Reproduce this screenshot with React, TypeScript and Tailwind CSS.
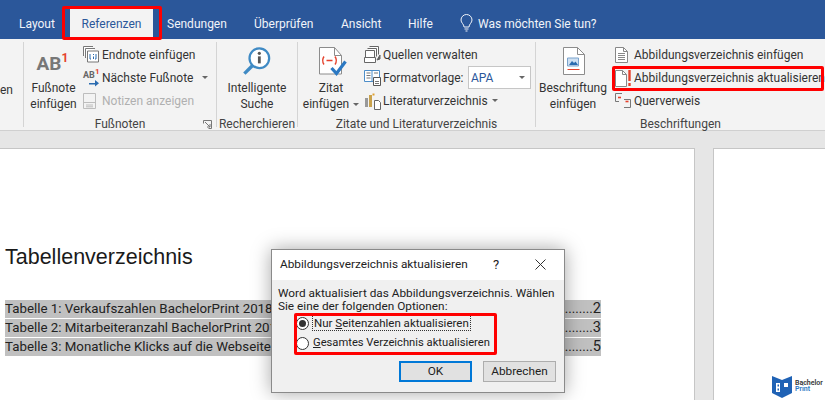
import React from 'react';

const Tab: React.FC<{ label: string; className?: string }> = ({ label, className }) => (
    <span className={`text-[12px] leading-[34px] text-[#f1f4f9] ${className ?? ''}`}>{label}</span>
);

const SmallItem: React.FC<{ icon: React.ReactNode; label: string; disabled?: boolean; arrow?: string }> = ({ icon, label, disabled, arrow }) => (
    <div className="flex items-center h-[23px] whitespace-nowrap">
        <span className="w-[19px] h-[20px] flex items-center shrink-0">{icon}</span>
        <span className={disabled ? 'text-[#b0b0b0]' : 'text-[#333]'}>{label}</span>
        {arrow && <span className={`w-0 h-0 border-x-[3px] border-x-transparent border-t-[3px] border-t-[#666] ${arrow}`} />}
    </div>
);

const GroupLabel: React.FC<{ label: string; launcher?: boolean }> = ({ label, launcher }) => (
    <div className="absolute left-0 right-0 bottom-[-9px] h-[22px] text-center leading-[20px] text-[#444]">
        {label}
        {launcher && (
            <svg className="absolute right-[4px] top-[6px]" width="9" height="9" viewBox="0 0 9 9" fill="none" stroke="#777">
                <path d="M.5 3.500v-3h8v8h-3M2 2l5 5M4 7h3V4" />
            </svg>
        )}
    </div>
);

const StackIcon = () => (
    <svg width="16" height="17" viewBox="0 0 16 17" fill="none" stroke="#777">
        <path d="M.5 10V.5H10M2.500 12V2.500H12M4.500 5h11v11h-11z" fill="#fff" />
        <path d="M7 8v5h1M13 8v5h-1M10.500 8v1M10.500 10.500v2.500" stroke="#2b6cb0" />
    </svg>
);

const NextNoteIcon = () => (
    <span className="relative block w-[16px] h-[18px] font-bold text-[9px] leading-[12px] text-[#666]">
        AB
        <span className="absolute left-[12px] top-[-3px] text-[#e5412c] text-[8px]">1</span>
        <svg className="absolute left-[6px] top-[10px]" width="10" height="8" viewBox="0 0 10 8">
            <path d="M0 4h6V1l4 3.200L6 7.500V5.500H0z" fill="#2b6cb0" />
        </svg>
    </span>
);

const NotesIcon = () => (
    <svg width="13" height="16" viewBox="0 0 13 16" fill="none" stroke="#bdbdbd">
        <path d="M.5.500h12v15H.5zM.5 9.500h12M3 12h7M3 13.800h7" />
    </svg>
);

const SearchInfoIcon = () => (
    <svg width="30" height="29" viewBox="0 0 30 31" fill="none">
        <circle cx="17.500" cy="12" r="10.500" stroke="#3f8ac4" strokeWidth="2.400" fill="#fff" />
        <path d="M10 20L1.500 28.500" stroke="#3f8ac4" strokeWidth="3.600" />
        <circle cx="17.500" cy="6.800" r="1.700" fill="#555" />
        <path d="M17.500 10v7.500" stroke="#555" strokeWidth="3" />
    </svg>
);

const CitationIcon = () => (
    <svg width="28" height="29" viewBox="0 0 28 29" fill="none">
        <path d="M.5.500h15l7 8V27H.5z" fill="#fff" stroke="#8c8c8c" />
        <path d="M15.500.500v8h7" stroke="#8c8c8c" />
        <path d="M5 9.500c-2 3-2 5 0 8M16 9.500c2 3 2 5 0 8M7.500 13.500h6" stroke="#e5412c" strokeWidth="1.400" />
        <path d="M12.500 21l5 5.500 9-12" stroke="#2b78c2" strokeWidth="3.200" />
    </svg>
);

const SourcesIcon = () => (
    <svg width="17" height="18" viewBox="0 0 17 18" fill="none" stroke="#666">
        <path d="M5.500.500h9v8M3.500 2.500h9v8M1.500 4.500h9v7h-9z" fill="#fff" />
        <path d="M.5 11.500h11v5H.5z" fill="#fff" />
        <path d="M13 14l3-5v4z" fill="#666" />
    </svg>
);

const StyleIcon = () => (
    <svg width="17" height="17" viewBox="0 0 17 17" fill="none">
        <path d="M.5 1.500h15v11H.5zM8 1.500v11" stroke="#4d8ec9" fill="#fff" />
        <path d="M2.500 4h4M2.500 6.500h4M2.500 9h4M10 4h4" stroke="#777" />
        <path d="M9.500 8.500h7v8h-7z" stroke="#555" fill="#fff" />
        <path d="M11 12.500h4M11 14.500h4" stroke="#777" />
    </svg>
);

const BibIcon = () => (
    <svg width="17" height="18" viewBox="0 0 17 18" fill="none">
        <path d="M1 6h3v9H1z" fill="#999" />
        <path d="M5 3h3v12H5z" fill="#c9a24d" />
        <path d="M8.500 2.500h2" stroke="#e0a030" strokeWidth="2" />
        <path d="M10.500 8.500h4l2 2v7h-6z" stroke="#666" fill="#fff" />
    </svg>
);

const CaptionIcon = () => (
    <svg width="22" height="28" viewBox="0 0 22 28" fill="none">
        <path d="M.5.500h14l7 7v20H.5z" fill="#fff" stroke="#8c8c8c" />
        <path d="M14.500.500v7h7" stroke="#8c8c8c" />
        <path d="M4.500 11h11v8h-11z" fill="#cfe0f2" stroke="#7aa3cc" />
        <path d="M6 18l3-4 2 2 1.500-1.500L15 18z" fill="#2b6cb0" />
        <path d="M4.500 22.500h12" stroke="#e5412c" />
    </svg>
);

const ListIcon = () => (
    <svg width="13" height="16" viewBox="0 0 13 16" fill="none" stroke="#888">
        <path d="M.5.500h8l4 4v11H.5z" fill="#fff" />
        <path d="M8.500.500v4h4M3 6.500h7M3 8.500h7M3 10.500h7M3 12.500h7" />
    </svg>
);

const UpdateIcon = () => (
    <svg width="17" height="18" viewBox="0 0 17 18" fill="none">
        <path d="M.5 1.500h7l4 4v12H.5z" fill="#fff" stroke="#888" />
        <path d="M7.500 1.500v4h4" stroke="#888" />
        <path d="M14.500 1v11" stroke="#e5412c" strokeWidth="2.400" />
        <path d="M14.500 14v3" stroke="#e5412c" strokeWidth="2.400" />
    </svg>
);

const CrossRefIcon = () => (
    <svg width="16" height="15" viewBox="0 0 16 15" fill="none">
        <path d="M7 .500H.5v8H4M9 6.500h6.500v8H9" stroke="#777" />
        <path d="M3 4.500h3" stroke="#e5412c" strokeWidth="1.600" />
        <path d="M10.500 8.500h3" stroke="#e5412c" strokeWidth="1.600" />
    </svg>
);

const TocRow: React.FC<{ text: string; dots: number; page: number }> = ({ text, dots, page }) => (
    <div className="flex justify-between bg-[#c0c0c0] text-[#222] text-[13.300px] leading-[18px] whitespace-nowrap">
        <span>{text}</span>
        <span>{'.'.repeat(dots)}<span className="text-[14.500px]">{page}</span></span>
    </div>
);

const Radio: React.FC<{ checked?: boolean }> = ({ checked }) => (
    <span className="w-[13px] h-[13px] rounded-full border border-[#333] bg-white flex items-center justify-center shrink-0">
        {checked && <span className="w-[7px] h-[7px] rounded-full bg-[#333]" />}
    </span>
);

const Logo = () => (
    <div className="absolute left-[771px] top-[374px] flex items-center">
        <svg width="22" height="24" viewBox="0 0 22 24">
            <path d="M1 2l10 4 10-4v17l-10 5-10-5z" fill="#1f62b5" />
            <path d="M5 9h4v9H5zM13 9h4v4h-4z" fill="#fff" />
            <path d="M6.500 10.500h1.500v2h-1.500zM6.500 14.500h1.500v2h-1.500zM14.500 14v5h-1.500v-5z" fill="#1f62b5" />
        </svg>
        <div className="ml-[2px] text-[7px] leading-[6px] font-semibold">
            <div className="text-[#333]">Bachelor</div>
            <div className="text-[#2b78c2]">Print</div>
        </div>
    </div>
);

export default function App() {
    return (
        <div className="relative w-[825px] h-[400px] overflow-hidden flex flex-col bg-[#e6e6e6] font-['Roboto',sans-serif] text-[12px]">
            {/* Title / tab strip */}
            <div className="relative h-[39px] bg-[#2b579a] shrink-0 flex items-start pt-[7px]">
                <Tab label="Layout" className="ml-[19px] w-[36px]" />
                <div className="ml-[15px] w-[83px] h-[32px] bg-[#f3f3f3] text-center">
                    <span className="text-[12px] leading-[34px] text-[#2b579a]">Referenzen</span>
                </div>
                <Tab label="Sendungen" className="ml-[14px] w-[60px]" />
                <Tab label="Überprüfen" className="ml-[27px] w-[60px]" />
                <Tab label="Ansicht" className="ml-[27px] w-[40px]" />
                <Tab label="Hilfe" className="ml-[27px] w-[25px]" />
                <svg className="ml-[27px] mt-[7px]" width="13" height="18" viewBox="0 0 13 18" fill="none" stroke="#f1f4f9">
                    <path d="M4 13c0-3-3-4-3-7a5.500 5.500 0 0 1 11 0c0 3-3 4-3 7zM4.500 15h4M5.500 17h2" />
                </svg>
                <Tab label="Was möchten Sie tun?" className="ml-[5px]" />
            </div>

            {/* Ribbon */}
            <div className="h-[92px] shrink-0 bg-[#f3f3f3] border-b border-[#d0d0d0] flex text-[#333]">
                <div className="w-[24px] shrink-0 border-r border-[#d4d4d4] my-[3px] text-right pr-[12px] pt-[38px] leading-[20px] overflow-hidden">
                    en
                </div>

                <div className="relative w-[193px] shrink-0 border-r border-[#d4d4d4] my-[3px] flex">
                    <div className="w-[59px] shrink-0 flex flex-col items-center">
                        <div className="h-[29px] mt-[9px] relative w-[34px] font-bold text-[19px] leading-[26px] text-[#777]">
                            AB
                            <span className="absolute left-[25px] top-[-6px] text-[12px] text-[#e5412c]">1</span>
                        </div>
                        <div className="leading-[16px] text-center">Fußnote<br />einfügen</div>
                    </div>
                    <div className="pt-[1px]">
                        <SmallItem icon={<StackIcon />} label="Endnote einfügen" />
                        <SmallItem icon={<NextNoteIcon />} label="Nächste Fußnote" arrow="ml-[9px]" />
                        <SmallItem icon={<NotesIcon />} label="Notizen anzeigen" disabled />
                    </div>
                    <GroupLabel label="Fußnoten" launcher />
                </div>

                <div className="relative w-[81px] shrink-0 border-r border-[#d4d4d4] my-[3px] flex flex-col items-center">
                    <div className="mt-[5px] h-[33px]"><SearchInfoIcon /></div>
                    <div className="leading-[16px] text-center">Intelligente<br />Suche</div>
                    <GroupLabel label="Recherchieren" />
                </div>

                <div className="relative w-[238px] shrink-0 border-r border-[#d4d4d4] my-[3px] flex">
                    <div className="w-[66px] shrink-0 flex flex-col items-center">
                        <div className="mt-[5px] h-[33px] ml-[3px]"><CitationIcon /></div>
                        <div className="leading-[16px] text-center">
                            Zitat<br />einfügen
                            <span className="inline-block ml-[4px] mb-[2px] w-0 h-0 border-x-[3px] border-x-transparent border-t-[3px] border-t-[#666]" />
                        </div>
                    </div>
                    <div className="pt-[1px]">
                        <SmallItem icon={<SourcesIcon />} label="Quellen verwalten" />
                        <div className="flex items-center h-[23px] whitespace-nowrap">
                            <span className="w-[19px] flex items-center shrink-0"><StyleIcon /></span>
                            <span className="w-[85px]">Formatvorlage:</span>
                            <div className="w-[63px] h-[23px] bg-white border border-[#c6c6c6] flex items-center justify-between pl-[2px] pr-[5px] text-[#2b579a]">
                                APA
                                <span className="w-0 h-0 border-x-[3px] border-x-transparent border-t-[3px] border-t-[#666]" />
                            </div>
                        </div>
                        <SmallItem icon={<BibIcon />} label="Literaturverzeichnis" arrow="ml-[4px]" />
                    </div>
                    <GroupLabel label="Zitate und Literaturverzeichnis" />
                </div>

                <div className="relative flex-1 my-[3px] flex">
                    <div className="w-[74px] shrink-0 flex flex-col items-center">
                        <div className="mt-[5px] h-[33px] ml-[2px]"><CaptionIcon /></div>
                        <div className="leading-[16px] text-center whitespace-nowrap">Beschriftung<br />einfügen</div>
                    </div>
                    <div className="pt-[1px] pl-[5px]">
                        <SmallItem icon={<ListIcon />} label="Abbildungsverzeichnis einfügen" />
                        <SmallItem icon={<UpdateIcon />} label="Abbildungsverzeichnis aktualisieren" />
                        <SmallItem icon={<CrossRefIcon />} label="Querverweis" />
                    </div>
                    <GroupLabel label="Beschriftungen" />
                </div>
            </div>

            {/* Document area */}
            <div className="flex-1 flex gap-[18px] pt-[17px] min-h-0">
                <div className="w-[695px] shrink-0 bg-white border-r border-t border-[#c6c6c6] pl-[5px] pr-[93px] pt-[96px]">
                    <h1 className="font-['Liberation_Sans',sans-serif] text-[21.500px] leading-[25px] text-[#1a1a1a] h-[55px]">Tabellenverzeichnis</h1>
                    <div className="flex flex-col gap-[1px]">
                        <TocRow text="Tabelle 1: Verkaufszahlen BachelorPrint 2018" dots={84} page={2} />
                        <TocRow text="Tabelle 2: Mitarbeiteranzahl BachelorPrint 2018" dots={80} page={3} />
                        <TocRow text="Tabelle 3: Monatliche Klicks auf die Webseite" dots={84} page={5} />
                    </div>
                </div>
                <div className="flex-1 bg-white border-l border-t border-[#c6c6c6]" />
            </div>

            {/* Dialog over the page */}
            <div className="absolute left-[271px] top-[249px] w-[294px] h-[144px] border border-[#8a8a8a] bg-[#f0f0f0] shadow-[0_0_18px_rgba(0,0,0,0.35)] flex flex-col text-[#222] text-[11.800px]">
                <div className="h-[30px] bg-white flex items-center pl-[8px] shrink-0 relative">
                    <span>Abbildungsverzeichnis aktualisieren</span>
                    <span className="absolute left-[221px] top-[5px] text-[13px]">?</span>
                    <svg className="absolute left-[263px] top-[9px]" width="11" height="11" viewBox="0 0 11 11" stroke="#333" fill="none">
                        <path d="M.5.500l10 10M10.500.500l-10 10" />
                    </svg>
                </div>
                <div className="px-[6px] pt-[7px] leading-[13px] whitespace-nowrap">
                    Word aktualisiert das Abbildungsverzeichnis. Wählen<br />
                    Sie eine der folgenden Optionen:
                </div>
                <div className="pl-[24px] flex flex-col text-[11.500px] whitespace-nowrap">
                    <div className="flex items-center h-[20px] gap-[3px]">
                        <Radio checked />
                        <span className="border border-dotted border-[#333] leading-[14px] px-[1px]">Nur <u>S</u>eitenzahlen aktualisieren</span>
                    </div>
                    <div className="flex items-center h-[20px] gap-[3px]">
                        <Radio />
                        <span className="px-[1px] text-[11.200px]"><u>G</u>esamtes Verzeichnis aktualisieren</span>
                    </div>
                </div>
                <div className="flex justify-end gap-[11px] pr-[8px] pt-[8px]">
                    <div className="w-[73px] h-[21px] border-2 border-[#0078d7] bg-[#e1e1e1] text-center leading-[17px]">OK</div>
                    <div className="w-[73px] h-[21px] border border-[#adadad] bg-[#e1e1e1] text-center leading-[19px]">Abbrechen</div>
                </div>
            </div>

            {/* Red callouts */}
            <div className="absolute left-[62px] top-[6px] w-[100px] h-[34px] border-[3px] border-[#f00] rounded-[2px]" />
            <div className="absolute left-[612px] top-[66px] w-[212px] h-[25px] border-[3px] border-[#f00] rounded-[2px]" />
            <div className="absolute left-[294px] top-[313px] w-[203px] h-[42px] border-[3px] border-[#f00] rounded-[2px]" />

            <Logo />
        </div>
    );
}
